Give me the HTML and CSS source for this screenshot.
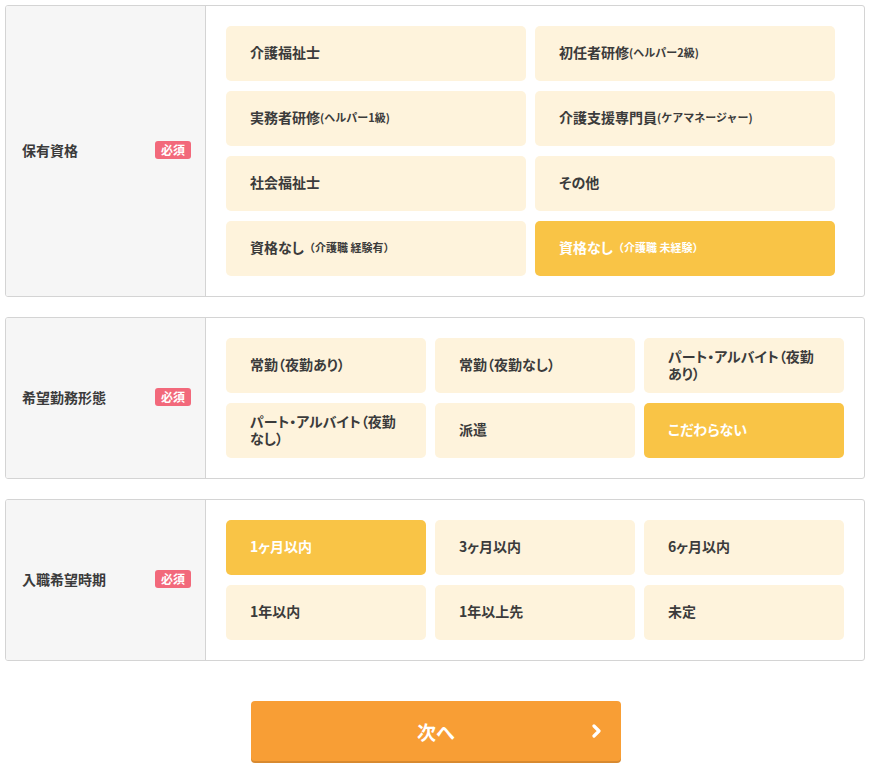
FILE: index.html
```html
<!DOCTYPE html>
<html lang="ja">
<head>
  <meta charset="UTF-8">
  <title>登録フォーム</title>
  <link rel="stylesheet" href="styles.css">
</head>
<body>
  <form class="entry">
    <div class="row">
      <div class="head">
        <span class="label">保有資格</span>
        <span class="req">必須</span>
      </div>
      <div class="choices cols2">
        <label class="opt">介護福祉士</label>
        <label class="opt">初任者研修<small>(ヘルパー2級)</small></label>
        <label class="opt">実務者研修<small>(ヘルパー1級)</small></label>
        <label class="opt">介護支援専門員<small>(ケアマネージャー)</small></label>
        <label class="opt">社会福祉士</label>
        <label class="opt">その他</label>
        <label class="opt">資格なし<small>（介護職 経験有）</small></label>
        <label class="opt on">資格なし<small>（介護職 未経験）</small></label>
      </div>
    </div>

    <div class="row">
      <div class="head">
        <span class="label">希望勤務形態</span>
        <span class="req">必須</span>
      </div>
      <div class="choices cols3">
        <label class="opt">常勤（夜勤あり）</label>
        <label class="opt">常勤（夜勤なし）</label>
        <label class="opt">パート・アルバイト（夜勤あり）</label>
        <label class="opt">パート・アルバイト（夜勤なし）</label>
        <label class="opt">派遣</label>
        <label class="opt on">こだわらない</label>
      </div>
    </div>

    <div class="row">
      <div class="head">
        <span class="label">入職希望時期</span>
        <span class="req">必須</span>
      </div>
      <div class="choices cols3">
        <label class="opt on">1ヶ月以内</label>
        <label class="opt">3ヶ月以内</label>
        <label class="opt">6ヶ月以内</label>
        <label class="opt">1年以内</label>
        <label class="opt">1年以上先</label>
        <label class="opt">未定</label>
      </div>
    </div>

    <div class="submit">
      <button type="button" class="next">
        次へ
        <svg class="arrow" width="12" height="14" viewBox="0 0 12 14"><polyline points="3,2 8,7 3,12" fill="none" stroke="#fff" stroke-width="3.2" stroke-linecap="round" stroke-linejoin="round"/></svg>
      </button>
    </div>
  </form>
</body>
</html>
```

FILE: styles.css
```css
body {
  margin: 0;
  padding: 5px;
  background: #fff;
  color: #3b3b3b;
  font-family: "Noto Sans CJK JP", "Noto Sans", sans-serif;
}

.entry {
  width: 860px;
}

.row {
  display: flex;
  border: 1px solid #d4d4d4;
  border-radius: 3px;
  margin-bottom: 20px;
  overflow: hidden;
}

.head {
  flex-shrink: 0;
  background: #f6f6f6;
  border-right: 1px solid #d4d4d4;
  display: flex;
  align-items: center;
  justify-content: space-between;
  padding: 0 14px 2px 16px;
  box-sizing: border-box;
  width: 200px;
}

.label {
  font-size: 14px;
  font-weight: bold;
  font-feature-settings: "palt";
}

.req {
  background: #f2697b;
  color: #fff;
  font-size: 12px;
  font-weight: bold;
  line-height: 18px;
  width: 36px;
  text-align: center;
  border-radius: 3px;
}

.choices {
  display: grid;
  gap: 10px 9px;
  padding: 20px;
  align-content: start;
}

.cols2 {
  grid-template-columns: 300px 300px;
}

.cols3 {
  grid-template-columns: 200px 200px 200px;
}

.opt {
  height: 55px;
  box-sizing: border-box;
  background: #fef3dc;
  border-radius: 5px;
  display: flex;
  align-items: center;
  padding: 0 30px 2px 24px;
  font-size: 14px;
  font-weight: bold;
  line-height: 17px;
  font-feature-settings: "palt";
  cursor: pointer;
}

.opt small {
  font-size: 11px;
  font-feature-settings: normal;
}

.opt.on {
  background: #f9c446;
  color: #fff;
}

.submit {
  display: flex;
  justify-content: center;
  padding-top: 20px;
  padding-left: 2px;
}

.next {
  position: relative;
  width: 370px;
  height: 60px;
  border: none;
  border-radius: 4px;
  background: #f89e35;
  box-shadow: 0 2px 0 #d88a30;
  color: #fff;
  font-family: inherit;
  font-size: 19px;
  font-weight: bold;
  cursor: pointer;
}

.arrow {
  position: absolute;
  right: 18px;
  top: 23px;
}
```
